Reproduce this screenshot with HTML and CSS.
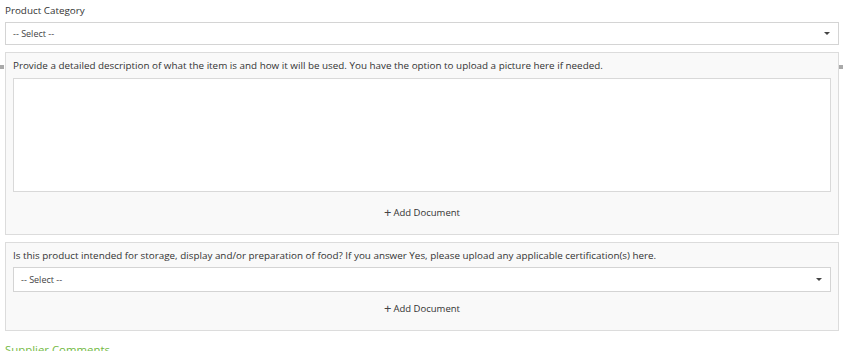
FILE: index.html
```html
<!DOCTYPE html>
<html lang="en">

<head>
    <meta charset="UTF-8" />
    <meta name="viewport" content="width=device-width, initial-scale=1.0" />
    <title>Product Request</title>
    <link rel="stylesheet" href="styles.css">
</head>

<body>
    <div class="form">
        <div class="field">
            <label class="field-label">Product Category</label>
            <div class="select">
                <span class="select-text">-- Select --</span>
                <span class="select-caret"></span>
            </div>
        </div>

        <div class="panel panel-handles">
            <div class="panel-question">Provide a detailed description of what the item is and how it will be used. You have the option to upload a picture here if needed.</div>
            <div class="textarea"></div>
            <div class="add-doc"><span class="plus">+</span>Add Document</div>
        </div>

        <div class="panel">
            <div class="panel-question">Is this product intended for storage, display and/or preparation of food? If you answer Yes, please upload any applicable certification(s) here.</div>
            <div class="select select-lg">
                <span class="select-text">-- Select --</span>
                <span class="select-caret"></span>
            </div>
            <div class="add-doc"><span class="plus">+</span>Add Document</div>
        </div>

        <h3 class="section-title">Supplier Comments</h3>
    </div>
</body>

</html>
```

FILE: styles.css
```css
* {
    margin: 0;
    padding: 0;
    box-sizing: border-box;
}

body {
    font-family: 'Open Sans', sans-serif;
    font-size: 9.85px;
    color: #333333;
    background: #ffffff;
    overflow: hidden;
}

.form {
    display: flex;
    flex-direction: column;
    gap: 7px;
    padding: 2px 5px 0 5px;
}

.field {
    display: flex;
    flex-direction: column;
    gap: 4px;
}

.field-label {
    line-height: 16px;
}

/* Select boxes */
.select {
    display: flex;
    align-items: center;
    justify-content: space-between;
    height: 23px;
    padding: 0 8px 0 7px;
    background: #ffffff;
    border: 1px solid #d4d4d4;
}

.select-lg {
    height: 25px;
}

.select-text {
    font-size: 9px;
    color: #444444;
}

.select-caret {
    width: 0;
    height: 0;
    border-left: 3px solid transparent;
    border-right: 3px solid transparent;
    border-top: 3px solid #444444;
}

/* Question panels */
.panel {
    position: relative;
    display: flex;
    flex-direction: column;
    padding: 5px 7px 6px 7px;
    background: #f9f9f9;
    border: 1px solid #dcdcdc;
}

.panel-question {
    line-height: 15px;
    margin-bottom: 4px;
}

.textarea {
    height: 114px;
    margin-top: 1px;
    margin-bottom: 4px;
    background: #ffffff;
    border: 1px solid #d9d9d9;
}

.add-doc {
    display: flex;
    align-items: center;
    justify-content: center;
    height: 32px;
    font-size: 9.5px;
    color: #333333;
}

.plus {
    font-size: 13px;
    margin-right: 2px;
    line-height: 1;
    color: #444444;
}

.panel-handles::before,
.panel-handles::after {
    content: '';
    position: absolute;
    top: 12px;
    width: 4px;
    height: 4px;
    background-image: radial-gradient(circle, #555555 45%, transparent 55%);
    background-size: 2px 2px;
}

.panel-handles::before {
    left: -6px;
}

.panel-handles::after {
    right: -5px;
}

.section-title {
    font-size: 11.4px;
    font-weight: 400;
    line-height: 18px;
    margin-top: 3px;
    color: #72b943;
}
```
